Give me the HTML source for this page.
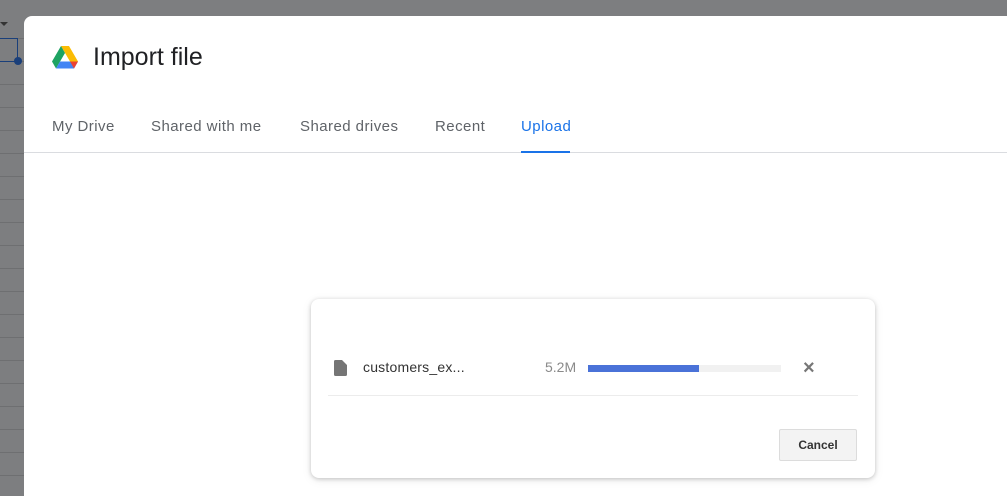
<!DOCTYPE html>
<html><head><style>
html,body{margin:0;width:1007px;height:496px;overflow:hidden}
body{background:#7d7e80;font-family:"Liberation Sans",Arial,sans-serif;position:relative}
.grid{position:absolute;left:0;top:16px;width:24px;height:480px;background:repeating-linear-gradient(#7d7e80 0 22px,#6e6f71 22px 23px)}
.dlg{position:absolute;left:24px;top:16px;width:983px;height:480px;background:#fff;border-radius:8px 0 0 0;overflow:hidden}
.title{position:absolute;left:69px;top:27px;font-size:25px;color:#202124}
.tabs{position:absolute;top:101px;left:0;right:0;height:35px;border-bottom:1px solid #dadce0}
.tab{position:absolute;top:1px;font-size:15px;color:#5f6368;letter-spacing:.45px}
.card{position:absolute;left:311px;top:299px;width:564px;height:179px;background:#fff;border-radius:8px;box-shadow:0 1px 4px rgba(0,0,0,.2),0 2px 10px rgba(0,0,0,.08)}
</style></head><body>
<div class="grid"></div>
<div style="position:absolute;left:0;top:38px;width:17px;height:22px;border:1px solid #1a3f7a;border-left:none"></div>
<div style="position:absolute;left:14px;top:57px;width:8px;height:8px;border-radius:50%;background:#1a3f7a"></div>
<div style="position:absolute;left:0;top:22px;width:0;height:0;border-left:4px solid transparent;border-right:4px solid transparent;border-top:4px solid #333"></div>
<div class="dlg">
<svg style="position:absolute;left:28px;top:30px" width="26" height="23" viewBox="0 0 26 23">
<path d="M9 0h8l9 15.5h-8z" fill="#fbbc04"/>
<path d="M9 0L0 15.5l4 7 9-15.5z" fill="#1ea362"/>
<path d="M4 22.5h18l4-7H8z" fill="#4285f4"/>
<path d="M18 15.5h8l-4 7z" fill="#ea4335"/>
</svg>
<div class="title">Import file</div>
<div class="tabs">
<span class="tab" style="left:28px">My Drive</span>
<span class="tab" style="left:127px">Shared with me</span>
<span class="tab" style="left:276px">Shared drives</span>
<span class="tab" style="left:411px">Recent</span>
<span class="tab" style="left:497px;color:#1a73e8">Upload</span>
<div style="position:absolute;left:497px;width:49px;bottom:-1px;height:2px;background:#1a73e8"></div>
</div>
</div>
<div class="card">
<svg style="position:absolute;left:23px;top:61px" width="13" height="16" viewBox="0 0 13 16"><path d="M1.5 0H8l5 5v9.5A1.5 1.5 0 0 1 11.5 16h-10A1.5 1.5 0 0 1 0 14.5v-13A1.5 1.5 0 0 1 1.5 0z" fill="#757575"/></svg>
<div style="position:absolute;left:52px;top:60px;font-size:14px;color:#333;letter-spacing:.2px">customers_ex...</div>
<div style="position:absolute;left:234px;top:60px;font-size:14px;color:#8a8a8a">5.2M</div>
<div style="position:absolute;left:277px;top:66px;width:193px;height:7px;background:#f1f1f1"></div>
<div style="position:absolute;left:277px;top:66px;width:111px;height:7px;background:#4a72d8"></div>
<div style="position:absolute;left:492px;top:58px;font-size:20px;color:#777;font-weight:bold">×</div>
<div style="position:absolute;left:17px;right:17px;top:96px;height:1px;background:#ececec"></div>
<div style="position:absolute;left:468px;top:130px;width:76px;height:30px;background:#f3f3f3;border:1px solid #dcdcdc;border-radius:2px;font-size:12px;font-weight:bold;color:#333;text-align:center;line-height:30px">Cancel</div>
</div>
</body></html>
